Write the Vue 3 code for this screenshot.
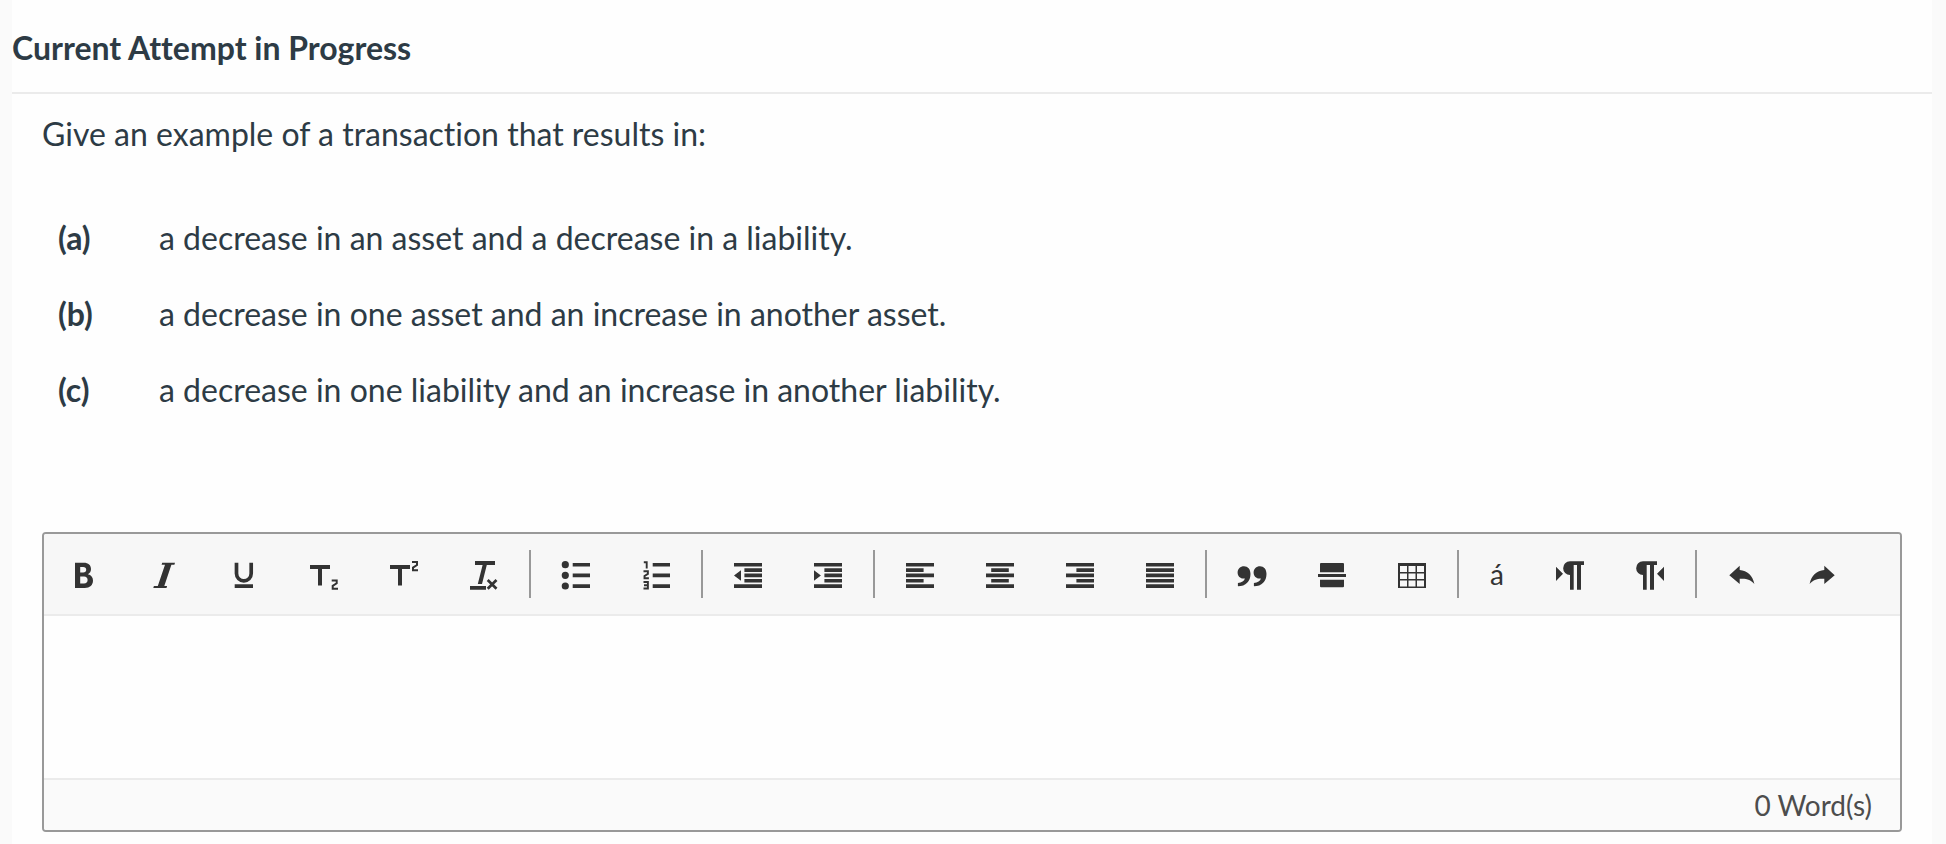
<script setup>
import { ref, computed } from 'vue'

const parts = [
  { label: '(a)', text: 'a decrease in an asset and a decrease in a liability.' },
  { label: '(b)', text: 'a decrease in one asset and an increase in another asset.' },
  { label: '(c)', text: 'a decrease in one liability and an increase in another liability.' },
]

const pilcrow = (x) =>
  `M${x + 21} 3.3v3.7h-3v24.7h-4V7h-3.3v24.7H${x + 7}V17a6.85 6.85 0 0 1 0-13.7z`

const bars = (rows) => rows.map(([x, w], i) => `M${x} ${[4.9, 10.2, 15.5, 20.9, 26.2][i]}h${w}v3.7h${-w}z`).join('')

const undoArrow = 'M3.3 17.2L13.7 7.7v4.4c7.6.5 13 5.6 14.7 13.9-3.5-4.3-7.9-5.7-14.7-5.2V26z'
const redoArrow = 'M28.7 17.2L18.3 7.7v4.4c-7.6.5-13 5.6-14.7 13.9 3.5-4.3 7.900-5.700 14.700-5.200V26z'

const groups = [
  [
    { name: 'Bold', fill: 'M7 4.7h8.8c4.5 0 7.2 2.4 7.2 6.3 0 2.5-1.1 4.3-3.1 5.2 3.2.8 5.1 3 5.1 6.3 0 4.6-3.2 7.5-8.2 7.5H7zM12.2 8.9v5.6h3c1.9 0 3-1 3-2.8s-1.1-2.8-3-2.8zM12.2 18.5v7.1h3.8c2.3 0 3.6-1.3 3.6-3.5s-1.3-3.6-3.6-3.6z' },
    { name: 'Italic', fill: 'M14.2 4.7H27l-.6 2h-3L16.3 28h2.8l-.6 2H5.3l.6-2h3.9L17 6.7h-3.4z' },
    { name: 'Underline', fill: 'M6.7 26.2H25V30H6.7z', line: 'M8.5 4.7v10.8a7.3 7.3 0 0 0 14.7 0V4.7', width: 3.7 },
    { name: 'Subscript', fill: 'M2 7h20v4h-8v16.5h-4V11H2z', line: 'M23.7 22.4h5v2.9l-4 2.6v2.8H30', width: 2 },
    { name: 'Superscript', fill: 'M2 7h20v4h-8v16.5h-4V11H2z', line: 'M24 4.1h5v2.9l-4 2.6v2.7H30', width: 2 },
    { name: 'Clear Formatting', fill: 'M7 3h20v4h-8.2L14 26H9.8L14.6 7H7zM2 28h16v3.7H2z', line: 'M19.7 22l8.8 8.8M28.5 22l-8.8 8.8', width: 2.7 },
  ],
  [
    { name: 'Unordered List', fill: 'M12.7 4.9H30v3.7H12.7zM12.7 15.5H30v3.7H12.7zM12.7 26.2H30v3.7H12.7zM1.7 6.7a3.6 3.6 0 1 0 7.2 0 3.6 3.6 0 1 0-7.2 0zM1.7 17.3a3.6 3.6 0 1 0 7.2 0 3.6 3.6 0 1 0-7.2 0zM1.7 28a3.6 3.6 0 1 0 7.2 0 3.6 3.6 0 1 0-7.2 0z' },
    { name: 'Ordered List', fill: 'M12.7 4.9H30v3.7H12.7zM12.7 15.5H30v3.7H12.7zM12.7 26.2H30v3.7H12.7z', line: 'M3.8 4.2h2.9v6.3M3.5 13.3h4.4v2.6L4.5 18v2.2h4.4M3.5 24h4.400v6.500H3.500M4 27.200h4', width: 1.9 },
  ],
  [
    { name: 'Decrease Indent', fill: bars([[2, 28], [12.4, 17.6], [12.4, 17.6], [12.4, 17.6], [2, 28]]) + 'M2 17.500l7-5.300v10.600z' },
    { name: 'Increase Indent', fill: bars([[2, 28], [12.4, 17.6], [12.4, 17.6], [12.4, 17.6], [2, 28]]) + 'M8.900 17.500l-6.900-5.300v10.600z' },
  ],
  [
    { name: 'Align Left', fill: bars([[2, 28], [2, 17.6], [2, 28], [2, 17.6], [2, 28]]) },
    { name: 'Align Center', fill: bars([[2, 28], [7.2, 17.6], [2, 28], [7.2, 17.6], [2, 28]]) },
    { name: 'Align Right', fill: bars([[2, 28], [12.4, 17.6], [2, 28], [12.4, 17.6], [2, 28]]) },
    { name: 'Align Justify', fill: bars([[2, 28], [2, 28], [2, 28], [2, 28], [2, 28]]) },
  ],
  [
    { name: 'Quote', fill: [1.7, 17.7].map((x) => `M${x + 6.3} 8.3c3.8 0 6.5 2.8 6.5 7.6 0 7.1-4.6 12.2-12.6 12.4v-3.4c3.8-.3 6.4-1.9 7-4.4-.4.1-.8.1-1.2.1-3.5 0-6.1-2.5-6.1-6.1s2.7-6.2 6.4-6.2z`).join('') },
    { name: 'Insert Horizontal Line', fill: 'M5 5h22a1 1 0 0 1 1 1v8.3H4V6a1 1 0 0 1 1-1zM2 16h28v3H2zM4 21.7h24v6.6a1 1 0 0 1-1 1H5a1 1 0 0 1-1-1z' },
    { name: 'Insert Table', fill: 'M2 5h28v25H2zM4 8v6h7V8zM12.500 8v6h7V8zM21 8v6h7V8zM4 15.500v5.500h7v-5.500zM12.500 15.500v5.500h7v-5.500zM21 15.500v5.500h7v-5.500zM4 22.500v6h7v-6zM12.500 22.500v6h7v-6zM21 22.500v6h7v-6z' },
  ],
  [
    { name: 'Insert Special Character', glyph: 'á' },
    { name: 'Left To Right', fill: pilcrow(9) + 'M2 8.700l7 7.100-7 7.100z' },
    { name: 'Right To Left', fill: pilcrow(2) + 'M30 8.700l-7 7.100 7 7.100z' },
  ],
  [
    { name: 'Undo', fill: undoArrow },
    { name: 'Redo', fill: redoArrow },
  ],
]

const answer = ref('')
const wordCount = computed(() => answer.value.split(/\s+/).filter(Boolean).length)
</script>

<template>
  <div class="page">
    <main class="panel">
      <header class="status">
        <h1>Current Attempt in Progress</h1>
      </header>
      <section class="question">
        <p class="prompt">Give an example of a transaction that results in:</p>
        <table class="parts">
          <tbody>
            <tr v-for="part in parts" :key="part.label">
              <th scope="row">{{ part.label }}</th>
              <td>{{ part.text }}</td>
            </tr>
          </tbody>
        </table>
        <div class="editor">
          <div class="toolbar" role="toolbar" aria-label="Text formatting">
            <div v-for="(group, i) in groups" :key="i" class="group">
              <button
                v-for="tool in group"
                :key="tool.name"
                type="button"
                class="tool"
                :class="{ character: tool.glyph }"
                :aria-label="tool.name"
              >
                <template v-if="tool.glyph">{{ tool.glyph }}</template>
                <svg v-else viewBox="0 0 32 32" aria-hidden="true">
                  <path v-if="tool.fill" :d="tool.fill" fill="currentColor" fill-rule="evenodd" />
                  <path v-if="tool.line" :d="tool.line" fill="none" stroke="currentColor" :stroke-width="tool.width" />
                </svg>
              </button>
            </div>
          </div>
          <textarea v-model="answer" class="answer" aria-label="Answer"></textarea>
          <div class="counter">{{ wordCount }} Word(s)</div>
        </div>
      </section>
    </main>
  </div>
</template>

<style>
body {
  background: #fafafa;
}
</style>

<style scoped>
.page {
  box-sizing: border-box;
  min-height: 100vh;
  display: flex;
  padding: 0 14px 0 12px;
  color: #2d3b45;
  font-family: Lato, "Liberation Sans", sans-serif;
  font-size: 32px;
  font-variant-ligatures: none;
  line-height: 48px;
}
.panel {
  flex: 1;
  min-width: 0;
  background: #fefefe;
}
.status {
  padding: 24px 0 20px;
  border-bottom: 2px solid #ebebeb;
}
h1 {
  margin: 0;
  font-size: 32px;
  font-weight: 700;
}
.question {
  padding: 16px 30px 12px;
}
.prompt {
  margin: 0 0 42px;
}
.parts {
  border-collapse: collapse;
  margin-bottom: 104px;
}
.parts th,
.parts td {
  padding: 14px 16px;
  text-align: left;
  vertical-align: top;
}
.parts th {
  width: 69px;
  font-weight: 700;
}
.editor {
  border: 2px solid #999999;
  border-radius: 4px;
  overflow: hidden;
}
.toolbar {
  display: flex;
  flex-wrap: wrap;
  background: #f7f7f7;
  border-bottom: 2px solid #ebebeb;
}
.group {
  display: flex;
  align-items: center;
}
.group + .group::before {
  content: "";
  width: 2px;
  height: 48px;
  margin: 0 5px;
  background: #999999;
}
.tool {
  display: flex;
  align-items: center;
  justify-content: center;
  width: 80px;
  height: 80px;
  padding: 0;
  border: 0;
  background: transparent;
  color: #333333;
  font: inherit;
  font-size: 28px;
}
.character {
  width: 66px;
}
.tool svg {
  width: 32px;
  height: 32px;
}
.answer {
  display: block;
  box-sizing: border-box;
  width: 100%;
  height: 162px;
  padding: 16px 28px;
  border: 0;
  outline: 0;
  resize: none;
  background: #fefefe;
  color: inherit;
  font: inherit;
}
.counter {
  padding: 1px 28px;
  border-top: 2px solid #ebebeb;
  background: #fafafa;
  color: #4d4d4d;
  font-size: 28px;
  text-align: right;
}
</style>
